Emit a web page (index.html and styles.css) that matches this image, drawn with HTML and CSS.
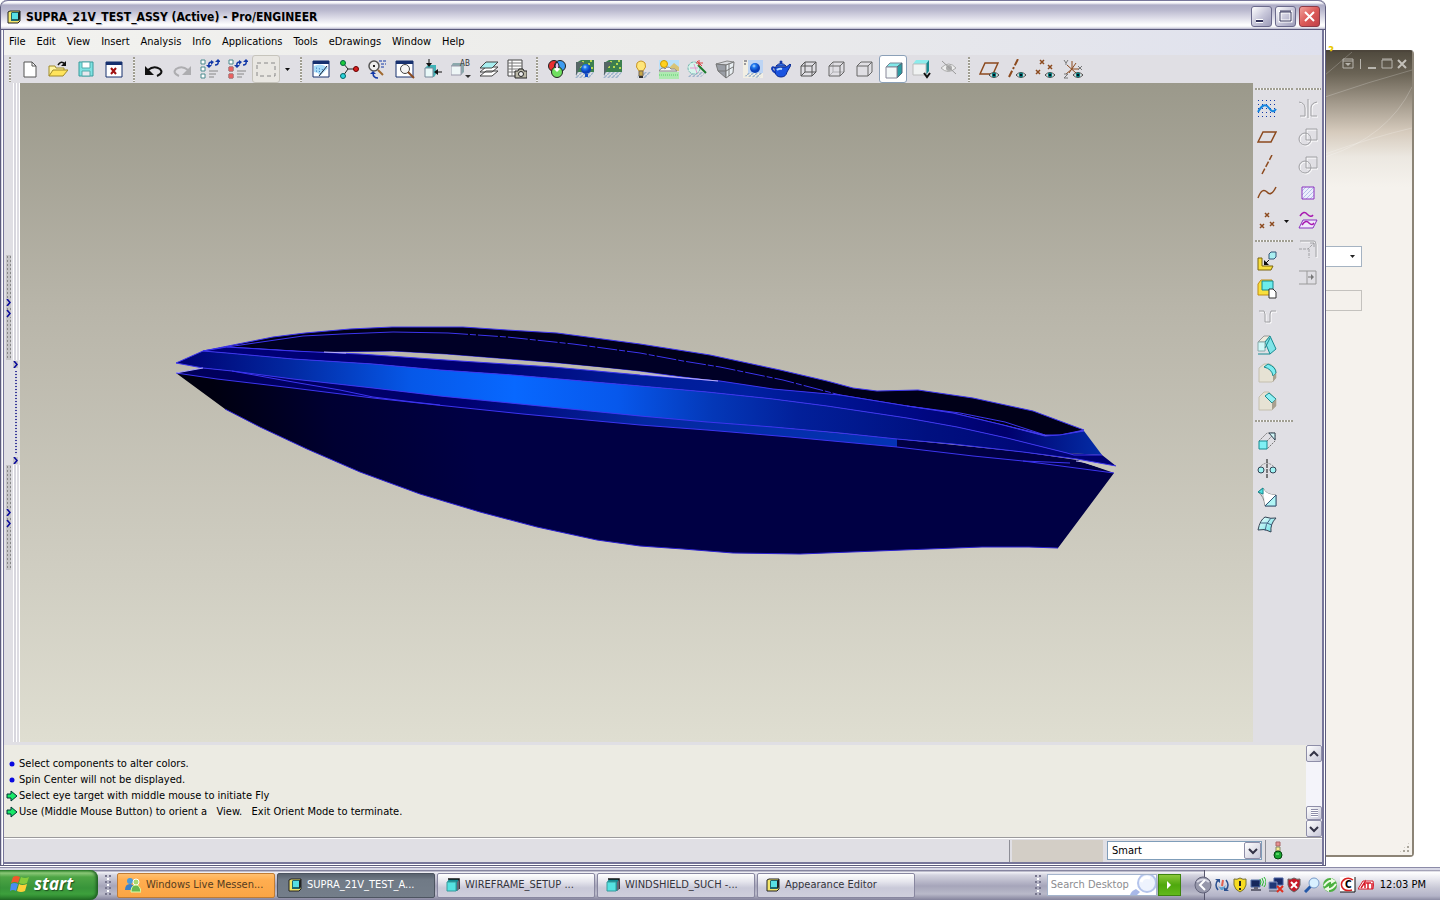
FILE: index.html
```html
<!DOCTYPE html>
<html lang="en">
<head>
    <meta charset="UTF-8">
    <meta name="viewport" content="width=device-width, initial-scale=1.0">
    <title>SUPRA_21V_TEST_ASSY (Active) - Pro/ENGINEER</title>
    <link rel="stylesheet" href="styles.css">
</head>
<body>

<!-- Shared icon parts -->
<svg class="defs" width="0" height="0" aria-hidden="true">
    <defs>
        <pattern id="hatch" width="4" height="4" patternUnits="userSpaceOnUse"><path d="M0 4L4 0" stroke="#9db4cc" stroke-width="1.5"/></pattern>
        <pattern id="dots" width="4" height="4" patternUnits="userSpaceOnUse"><path d="M1 1h1v1h-1z" fill="#1238a8"/></pattern>
        <linearGradient id="cyan" x2="1" y2="1"><stop offset="0" stop-color="#f4ffff"/><stop offset="1" stop-color="#5cdfe4"/></linearGradient>
        <radialGradient id="ball" cx=".4" cy=".3"><stop offset="0" stop-color="#bfe0ff"/><stop offset=".4" stop-color="#1f7bf0"/><stop offset="1" stop-color="#0a3fb8"/></radialGradient>
        <symbol id="part" viewBox="0 0 14 14"><path d="M1 4l2-3h10v10l-2 2H1z" fill="#138d94"/><path d="M1 4h9v9H1z" fill="#55e2e2" stroke="#3a9a9c"/><path d="M2 1h11v10" fill="none" stroke="#111" stroke-width="1.500"/><path d="M11 4l2-2v9l-2 2z" fill="#667"/></symbol>
        <symbol id="assy" viewBox="0 0 14 14"><path d="M1 2l2-1h10v10l-2 2H1z" fill="#f3e66b" stroke="#222"/><path d="M5 2h8v7l-2 2H4V3z" fill="#20666c"/><path d="M5 3h6v6H5z" fill="#58dfe4"/><path d="M11 3l2-2v8l-2 2z" fill="#222"/></symbol>
        <symbol id="eye" viewBox="0 0 10 6"><path d="M0 3Q5-2 10 3Q5 8 0 3z" fill="#fff" stroke="#444"/><circle cx="5" cy="3" r="2.4" fill="#087c7c"/><path d="M4 2h2v2H4z" fill="#012"/></symbol>
        <symbol id="tree" viewBox="0 0 20 20"><path d="M1 1h4v4H1zM1 8h4v4H1zM1 15h4v4H1z" fill="#fff" stroke="#4b8a8e"/><path d="M9 7q-1-4 3-4M18 2q1 4-3 4" fill="none" stroke="#1238a8" stroke-width="1.500"/><path d="M6 6h6L9 9zM15 3h6l-3-3zM11 1l3 2-3 3z" fill="#1238a8"/><path d="M9 12h9M9 15h7M9 18h5" stroke="#888"/></symbol>
        <symbol id="shapes" viewBox="0 0 20 20"><g fill="none" stroke="#fff"><path d="M9 3h11v11H9z"/><circle cx="8" cy="13" r="6"/></g><g fill="none" stroke="#a0a0a4"><path d="M8 2h11v11H8z"/><circle cx="7" cy="12" r="6"/></g></symbol>
        <symbol id="scene" viewBox="0 0 20 20"><path d="M1 4l5-3h13v12H1z" fill="#3c7f4f"/><path d="M2 4h2M7 3h2M13 5h2M10 8h2M16 9h2M5 8h2M15 2h2" stroke="#b8d850" stroke-width="2"/><path d="M1 13h18l-4 6H0z" fill="url(#hatch)"/><path d="M1 3v14l3-7 5-7z" fill="#566"/></symbol>
        <symbol id="chev" viewBox="0 0 5 7"><path d="M1 0l3 3.5L1 7" fill="none" stroke="#0a0a9c" stroke-width="1.6"/></symbol>
    </defs>
</svg>

<main class="desktop">

    <section class="back-window" aria-label="Background window">
        <span class="back-mark" aria-hidden="true">?</span>
        <div class="back-inner">
            <svg class="swoosh" viewBox="0 0 90 160" preserveAspectRatio="none" aria-hidden="true"><path d="M0 23L28 0M0 45Q45 30 90 18M0 105Q65 85 90 35M0 102Q50 85 90 76" fill="none" stroke="#fff" stroke-opacity=".22"/></svg>
            <div class="back-controls">
                <button aria-label="Roll up"><svg width="12" height="12" viewBox="0 0 12 12"><path d="M1 1h10v9H1zM1 3h10" fill="none" stroke="#b8b5ae"/><path d="M3 5h6L6 8z" fill="#b8b5ae"/></svg></button>
                <span class="back-sep"></span>
                <button aria-label="Minimize back"><svg width="10" height="12" viewBox="0 0 10 12"><path d="M1 9h8v2H1z" fill="#b8b5ae"/></svg></button>
                <button aria-label="Maximize back"><svg width="12" height="12" viewBox="0 0 12 12"><path d="M1 2h10v8H1zM1 1h10" fill="none" stroke="#b8b5ae"/></svg></button>
                <button aria-label="Close back"><svg width="10" height="12" viewBox="0 0 10 12"><path d="M1 2l8 8M9 2l-8 8" stroke="#c4c1ba" stroke-width="2"/></svg></button>
            </div>
            <div class="back-form">
                <select class="back-select" aria-label="Choice"><option></option></select>
                <input class="back-input" type="text" aria-label="Value" disabled>
            </div>
            <span class="back-grip" aria-hidden="true"></span>
        </div>
    </section>

    <section class="window">
        <header class="titlebar">
            <svg width="14" height="14"><use href="#assy"/></svg>
            <h1>SUPRA_21V_TEST_ASSY (Active) - Pro/ENGINEER</h1>
            <button class="win-btn" aria-label="Minimize"><svg width="19" height="19"><path d="M4 14h7" stroke="#fff" stroke-width="4"/><path d="M4 14h7" stroke="#33335a" stroke-width="2"/></svg></button>
            <button class="win-btn" aria-label="Maximize"><svg width="19" height="19"><path d="M4 5h11v9H4z" fill="none" stroke="#fff" stroke-width="3"/><path d="M4 5h11v9H4zM4 4h11" fill="none" stroke="#33335a"/></svg></button>
            <button class="win-btn close" aria-label="Close"><svg width="19" height="19"><path d="M5 5l9 9M14 5l-9 9" stroke="#fff" stroke-width="2"/></svg></button>
        </header>

        <nav class="menubar">
            <button>File</button><button>Edit</button><button>View</button><button>Insert</button><button>Analysis</button><button>Info</button><button>Applications</button><button>Tools</button><button>eDrawings</button><button>Window</button><button>Help</button>
        </nav>

        <div class="toolbar">
            <span class="grip"></span>
            <button aria-label="New"><svg viewBox="0 0 20 20"><path d="M4 3h8l4 4v11H4z" fill="#fff" stroke="#555"/><path d="M12 3v4h4" fill="none" stroke="#555"/></svg></button>
            <button aria-label="Open"><svg viewBox="0 0 20 20"><path d="M1 17V7h6l1 2h8v3" fill="#fff4a0" stroke="#a08a2a"/><path d="M1 17l4-6h15l-5 6z" fill="#ffe45c" stroke="#a08a2a"/><path d="M10 6q3-5 7-1" fill="none" stroke="#111" stroke-width="1.5"/><path d="M18 2v5h-5z" fill="#111"/></svg></button>
            <button aria-label="Save"><svg viewBox="0 0 20 20"><path d="M3 3h14v14H3z" fill="#7fe3e3" stroke="#3a9a9c"/><path d="M6 3h8v6H6z" fill="#fff" stroke="#5aa"/><path d="M6 12h8v5H6z" fill="#e8e8ee" stroke="#5aa"/></svg></button>
            <button aria-label="Close window"><svg viewBox="0 0 20 20"><path d="M2 3h16v15H2z" fill="#fff" stroke="#16306e"/><path d="M2 3h16v3H2z" fill="#16306e"/><path d="M7 9l5 6m0-6l-5 6" stroke="#a01010" stroke-width="2"/></svg></button>
            <span class="grip"></span>
            <button aria-label="Undo"><svg viewBox="0 0 20 20"><path d="M4 11q6-5 12-1q4 4-3 7" fill="none" stroke="#111" stroke-width="2"/><path d="M1 7v9h9z" fill="#111"/></svg></button>
            <button aria-label="Redo"><svg viewBox="0 0 20 20"><path d="M16 11q-6-5-12-1q-4 4 3 7" fill="none" stroke="#adadb0" stroke-width="2"/><path d="M19 7v9h-9z" fill="#adadb0"/></svg></button>
            <button aria-label="Regenerate"><svg viewBox="0 0 20 20"><use href="#tree"/></svg></button>
            <button aria-label="Regenerate manager"><svg viewBox="0 0 20 20"><use href="#tree"/><path d="M1 8h4v4H1zM1 15h4v4H1z" fill="#f06060" stroke="#c66"/></svg></button>
            <button class="framed" aria-label="Select"><svg viewBox="0 0 20 20"><path d="M1 4h18v13H1z" fill="none" stroke="#888" stroke-dasharray="4 3"/></svg></button>
            <button class="drop" aria-label="Select options"><svg viewBox="0 0 5 3"><path d="M0 0h5L2.500 3z" fill="#111"/></svg></button>
            <span class="grip"></span>
            <button aria-label="Sketcher display"><svg viewBox="0 0 20 20"><path d="M2 2h16v16H2z" fill="#fff" stroke="#16306e"/><path d="M2 2h16v3H2z" fill="#16306e"/><path d="M3 7q6-3 11 0l3 2-8 8-2-3-4-1z" fill="#a8dcf8"/><path d="M5 9l8 2M5 12l6 1M9 15l3-3" stroke="#2870b8" stroke-dasharray="1 2"/><path d="M8 17l8-10" stroke="#223"/></svg></button>
            <button aria-label="Spin center"><svg viewBox="0 0 20 20"><path d="M4 4l5 6-5 7M9 10h8" fill="none" stroke="#222"/><circle cx="4" cy="4" r="2.500" fill="#1ecb3c" stroke="#064"/><circle cx="4" cy="17" r="2.500" fill="#2cd3dc" stroke="#066"/><circle cx="17" cy="10" r="2.500" fill="#d81e1e" stroke="#600"/></svg></button>
            <button aria-label="Orient mode"><svg viewBox="0 0 20 20"><circle cx="7" cy="7" r="5" fill="#eee" stroke="#555" stroke-width="1.500"/><path d="M6 6h2v2H6z" fill="#222"/><path d="M11 11l5 5" stroke="#a06a30" stroke-width="2"/><path d="M12 2h7M14 5h5M14 8h4" stroke="#1238a8" stroke-dasharray="3 1"/><path d="M11 19q-5 0-5-5" fill="none" stroke="#1238a8" stroke-width="1.500"/><path d="M3 15l3-3 3 3z" fill="#1238a8"/></svg></button>
            <button aria-label="Refit"><svg viewBox="0 0 20 20"><path d="M1 2h17v16H1z" fill="#fff" stroke="#16306e"/><path d="M1 2h17v3H1z" fill="#16306e"/><circle cx="10" cy="10" r="4.500" fill="#f4f4f4" stroke="#444"/><path d="M13 13l6 6" stroke="#8a4a20" stroke-width="2"/></svg></button>
            <button aria-label="Reorient"><svg viewBox="0 0 20 20"><path d="M2 9l3-3h8v9l-2 3H2z" fill="#40b4b8"/><path d="M2 9h8v9H2z" fill="#e8f8f8" stroke="#789"/><path d="M6 0v6M19 13h-6" stroke="#111"/><path d="M3 4h6L6 8zM15 10v6l-4-3z" fill="#111"/></svg></button>
            <button aria-label="Saved views"><svg viewBox="0 0 20 20"><path d="M0 7l2-3h11v9l-3 3H0z" fill="#8ba8ac"/><path d="M0 7h10v9H0z" fill="#eef6f6" stroke="#99a"/><text x="9" y="7" class="icon-text">AB</text><path d="M14 16h6l-3 3z" fill="#333"/></svg></button>
            <button aria-label="Layers"><svg viewBox="0 0 20 20"><path d="M1 17l6-5h12l-6 5zM1 13l6-5h12l-6 5z" fill="#fff" stroke="#444"/><path d="M1 9l6-6h12l-6 6z" fill="#a8eef0" stroke="#444"/></svg></button>
            <button aria-label="View manager"><svg viewBox="0 0 20 20"><path d="M1 1h14v16H1z" fill="#fff" stroke="#444"/><path d="M1 4h14M1 7h14M1 10h14M1 13h14M5 1v16" stroke="#777"/><path d="M8 12h3l1-2h4l1 2h3v7H8z" fill="#bbb9a8" stroke="#222"/><circle cx="14" cy="15" r="2.500" fill="#eee" stroke="#222"/></svg></button>
            <span class="grip"></span>
            <button aria-label="Color and appearance"><svg viewBox="0 0 20 20"><circle cx="7" cy="7" r="5.500" fill="#e83030" stroke="#222"/><circle cx="13" cy="7" r="5.500" fill="#3c9cf0" stroke="#222"/><circle cx="10" cy="13" r="5.500" fill="#70e060" stroke="#222"/><path d="M10 3q4 4 0 8q-4-4 0-8" fill="#e8c0f0" stroke="#222"/><path d="M7 10q3-3 6 0l-3 3z" fill="#fff"/></svg></button>
            <button aria-label="Scene with model"><svg viewBox="0 0 20 20"><use href="#scene"/><circle cx="11" cy="10" r="5" fill="url(#ball)"/><path d="M10 15h3v3h-3z" fill="#1450c8"/></svg></button>
            <button aria-label="Scene"><svg viewBox="0 0 20 20"><use href="#scene"/></svg></button>
            <button aria-label="Lights"><svg viewBox="0 0 20 20"><path d="M9 13h11l-5 6H6z" fill="url(#hatch)"/><path d="M8 12q-4-4-2-8q4-4 8 0q2 4-2 8z" fill="#ffe67a" stroke="#c8952a"/><path d="M8 12h4v5H8z" fill="#c8a848" stroke="#765"/><path d="M8 18h4" stroke="#333" stroke-width="2"/></svg></button>
            <button aria-label="Environment"><svg viewBox="0 0 20 20"><path d="M0 1h20v11H0z" fill="#b8e0fa"/><path d="M9 10l6-6 5 4v4H9z" fill="#d8c478"/><circle cx="5" cy="5" r="3.500" fill="#ffd21e" stroke="#c90"/><path d="M0 12q3-5 6-2 3-4 6 0 4-1 6 2z" fill="#f4f4f4" stroke="#888"/><path d="M0 13h20v7H0z" fill="#aeeab0"/><path d="M0 16h20" stroke="#5aca6a" stroke-dasharray="1 1"/></svg></button>
            <button aria-label="Effects"><svg viewBox="0 0 20 20"><path d="M5 13h14l-5 5H0z" fill="url(#hatch)"/><circle cx="7" cy="9" r="6" fill="#d8f4ec" stroke="#74b8b0" stroke-dasharray="3 1"/><path d="M3 9h8M7 5l3 9" stroke="#ea9ad0"/><path d="M11 6l8 8" stroke="#1a7a2a" stroke-width="2"/><path d="M12 1v6M9 4h7M10 2l5 5" stroke="#e04040"/></svg></button>
            <button aria-label="Perspective"><svg viewBox="0 0 20 20"><path d="M1 5l11-3 7 1-8 3z" fill="#d8dade" stroke="#888"/><path d="M1 5l10 1v13L3 12z" fill="#9a9ea6" stroke="#777"/><path d="M11 6l8-3-1 11-7 5z" fill="#e8eef2" stroke="#777"/><path d="M3 12h8l7-4M14 5v12" fill="none" stroke="#777"/></svg></button>
            <button aria-label="Room"><svg viewBox="0 0 20 20"><path d="M0 1h20v18H0z" fill="#f2efe4"/><path d="M5 1h15v13H5z" fill="#bcd4f4"/><path d="M0 17l5-3h15l-4 5z" fill="url(#hatch)"/><circle cx="12" cy="9" r="5" fill="url(#ball)"/><path d="M1 2h3M1 5h2" stroke="#445"/></svg></button>
            <button aria-label="Render"><svg viewBox="0 0 20 20"><path d="M4 9Q1 7 1 10q1 3 4 4" fill="none" stroke="#123cb8" stroke-width="2"/><path d="M4 8h11q2-1 4-3l1 1-4 7q-1 5-6 5-5 0-6-5z" fill="#1a54e0" stroke="#0a2a90"/><path d="M5 7q5-5 10 0z" fill="#3a7af4" stroke="#0a2a90"/><circle cx="10" cy="3" r="1.500" fill="#1238a8"/><path d="M6 11q2-2 5-1" stroke="#b8dcff" fill="none" stroke-width="2"/></svg></button>
            <button aria-label="Wireframe"><svg viewBox="0 0 20 20"><path d="M2 7h11v10H2zM6 3h11v10H6zM2 7l4-4M13 7l4-4M13 17l4-4M2 17l4-4" fill="none" stroke="#555"/></svg></button>
            <button aria-label="Hidden line"><svg viewBox="0 0 20 20"><path d="M6 3v10h11M2 17l4-4" fill="none" stroke="#b0b0b4"/><path d="M2 7h11v10H2zM2 7l4-4h11v10l-4 4M13 7l4-4" fill="none" stroke="#666"/></svg></button>
            <button aria-label="No hidden"><svg viewBox="0 0 20 20"><path d="M2 7h11v10H2zM2 7l4-4h11v10l-4 4M13 7l4-4" fill="none" stroke="#666"/></svg></button>
            <button class="pressed" aria-label="Shading" aria-pressed="true"><svg viewBox="0 0 20 20"><path d="M3 8l4-4h12l-5 4z" fill="#80e8e8" stroke="#789"/><path d="M14 8l5-4v10l-5 5z" fill="#2a9ca2" stroke="#567"/><path d="M3 8h11v11H3z" fill="#f4f8f8" stroke="#889"/></svg></button>
            <button aria-label="Enhanced realism"><svg viewBox="0 0 20 20"><path d="M2 5l3-4h13l-3 4z" fill="#8cecec"/><path d="M15 5l3-4v11l-3 4z" fill="#178a90"/><path d="M2 5h13v11H2z" fill="#f0f2f2" stroke="#bbb"/><path d="M13 14l3 4 3-4" fill="none" stroke="#111" stroke-width="2"/></svg></button>
            <button aria-label="Hide"><svg viewBox="0 0 20 20"><path d="M2 9q8-8 15 0q-8 7-15 0z" fill="#eee" stroke="#aaa"/><circle cx="10" cy="9" r="3" fill="#aaa"/><path d="M3 2l14 13" stroke="#999"/></svg></button>
            <span class="grip"></span>
            <button aria-label="Show planes"><svg viewBox="0 0 20 20"><path d="M1 15L6 4h13l-5 11z" fill="none" stroke="#8c4a1e" stroke-width="1.500"/><use href="#eye" x="10" y="13" width="10" height="6"/></svg></button>
            <button aria-label="Show axes"><svg viewBox="0 0 20 20"><path d="M2 18L11 0" stroke="#8c4a1e" stroke-width="2" stroke-dasharray="7 2 2 2"/><use href="#eye" x="9" y="13" width="10" height="6"/></svg></button>
            <button aria-label="Show points"><svg viewBox="0 0 20 20"><path d="M5 1l4 4m0-4L5 5M1 11l4 4m0-4l-4 4M13 6l4 4m0-4l-4 4" stroke="#8c4a1e" stroke-width="1.500"/><use href="#eye" x="10" y="13" width="10" height="6"/></svg></button>
            <button aria-label="Show coordinate systems"><svg viewBox="0 0 20 20"><path d="M9 10V2M9 10l-6 5M9 10h7M4 6l9 8M13 4l-7 10" stroke="#8c4a1e"/><path d="M1 1l2 3 2-3M3 4v2M15 7l4 4m0-4l-4 4M1 15h4l-4 4h4" fill="none" stroke="#777"/><use href="#eye" x="10" y="13" width="10" height="6"/></svg></button>
        </div>

        <div class="workspace">
            <div class="sashes" aria-hidden="true">
                <div class="sash-col">
                    <div class="sash"><svg width="5" height="7"><use href="#chev"/></svg><svg width="5" height="7"><use href="#chev"/></svg></div>
                    <div class="sash"><svg width="5" height="7"><use href="#chev"/></svg><svg width="5" height="7"><use href="#chev"/></svg></div>
                </div>
                <div class="sash-rail">
                    <div class="sash-mid"><svg width="5" height="7"><use href="#chev"/></svg><span></span><svg width="5" height="7"><use href="#chev"/></svg></div>
                </div>
            </div>

            <div class="viewport">
                <svg class="model" viewBox="20 83 1233 659" role="img" aria-label="Shaded boat hull">
                    <defs>
                        <linearGradient id="band" gradientUnits="userSpaceOnUse" x1="176" y1="0" x2="1116" y2="0">
                            <stop offset="0" stop-color="#000070"/><stop offset=".12" stop-color="#0228a0"/><stop offset=".25" stop-color="#0658e8"/><stop offset=".36" stop-color="#0868ff"/><stop offset=".47" stop-color="#0758ec"/><stop offset=".57" stop-color="#0438b8"/><stop offset=".66" stop-color="#02209a"/><stop offset=".8" stop-color="#001080"/><stop offset="1" stop-color="#000070"/>
                        </linearGradient>
                        <linearGradient id="deck" gradientUnits="userSpaceOnUse" x1="200" y1="0" x2="1116" y2="0">
                            <stop offset="0" stop-color="#000078"/><stop offset=".3" stop-color="#000070"/><stop offset=".47" stop-color="#001c98"/><stop offset=".6" stop-color="#0020a0"/><stop offset=".78" stop-color="#000884"/><stop offset=".88" stop-color="#00006c"/><stop offset="1" stop-color="#0434b0"/>
                        </linearGradient>
                        <linearGradient id="strip" gradientUnits="userSpaceOnUse" x1="176" y1="0" x2="898" y2="0">
                            <stop offset="0" stop-color="#000058"/><stop offset=".4" stop-color="#000070"/><stop offset=".65" stop-color="#0428a0"/><stop offset="1" stop-color="#0434b4"/>
                        </linearGradient>
                        <linearGradient id="hull" gradientUnits="userSpaceOnUse" x1="215" y1="400" x2="460" y2="360">
                            <stop offset="0" stop-color="#000010"/><stop offset=".45" stop-color="#000032"/><stop offset="1" stop-color="#000044"/>
                        </linearGradient>
                    </defs>
                    <!-- hull -->
                    <path d="M176 373L203 369L232 371L293 379L373 388L440 396L510 403L640 416L773 427L897 439L1023 452L1077 460L1114 473L1058 548L1029 547H982L903 550L800 554L733 553L683 549L640 546L597 540L537 527L480 512L420 494L360 472L307 449L260 427L225 409z" fill="url(#hull)"/>
                    <path d="M225 409L260 427L307 449L360 472L420 494L480 512L537 527L597 540L640 546L683 549L733 553L800 554L903 550L982 547H1029L1058 548" fill="none" stroke="#2a20d0"/>
                    <path d="M176 373L203 368L232 371L293 379L373 388L440 396L510 403L640 416L707 422L773 427L897 439V447L790 437L707 430L640 425L523 414L437 405L373 398L293 388L217 379z" fill="url(#strip)"/>
                    <!-- coaming and open cockpit -->
                    <path d="M203 351L243 343L273 337L305 333L350 329L392 327H463L507 330L557 333L640 344L710 355L780 370L827 381L853 388L877 391L918 390L973 398L1033 411L1084 430L1060 435L1045 435L1003 425L953 413L907 406L840 395L773 389L720 381L683 377L640 371L603 367L560 363L510 359L447 354L393 351L313 352L227 347z" fill="#000018" stroke="#3c34f0"/>
                    <path d="M303 337L342 334L393 333L448 334L507 338L573 345L640 354L683 362L720 368L783 381L840 395L773 389L720 381L640 371L560 363L447 354L393 351L313 352L250 346z" fill="#000026"/>
                    <!-- deck edge and topside band -->
                    <path d="M203 351L227 347L293 351L360 354L460 361L553 367L640 375L720 381L773 389L840 395L907 406L953 413L1003 425L1045 436L1060 435L1084 431L1102 455L1067 453L1007 438L957 427L907 418L827 406L773 399L707 392L640 386L513 375L440 370L373 364L293 359L227 353z" fill="url(#deck)"/>
                    <path d="M176 363L203 351L227 353L293 359L373 364L440 370L513 375L640 386L707 392L773 399L827 406L907 418L957 427L1007 438L1067 453L1102 455L1116 466L1077 459L1023 452L953 444L897 439L840 433L773 427L707 422L640 416L510 403L440 396L373 388L293 379L232 371L203 368z" fill="url(#band)"/>
                    <!-- feature edges -->
                    <g class="edges">
                        <path d="M176 363L203 351L227 353L293 359L373 364L440 370L513 375L640 386L707 392L773 399L827 406L907 418L957 427L1007 438L1067 453L1074 455H1102"/>
                        <path d="M176 363L203 368L232 371L293 379L373 388L440 396L510 403L640 416L707 422L773 427L840 433L897 439L953 444L1023 452L1077 459L1116 466"/>
                        <path d="M203 351L227 347L293 351L360 354L460 361L553 367L640 375L720 381L773 389L840 395L907 406L953 413L1003 425L1045 436L1060 435L1084 431"/>
                        <path d="M176 373L217 379L293 388L373 398L437 405L523 414L640 425L707 430L790 437L897 447L973 456L1023 461L1114 473"/>
                        <path d="M232 371L293 382L340 390L373 397L413 402L440 405M227 347L303 336L342 334L393 332L448 333"/>
                        <path d="M448 333L507 337L573 344L640 353L683 361L720 367L783 380L840 395" stroke-dasharray="20 2 6 2"/>
                        <path d="M907 406L960 413L1005 422L1045 435M1023 461L1070 463"/>
                    </g>
                    <path d="M176 373L203 368" stroke="#aaa2ff"/>
                    <path d="M324 352L346 353M640 374L718 381M1076 461L1098 464" stroke="#b8b0f4"/>
                    <path d="M1078 461L1116 467L1114 472z" fill="#c8c7bd"/>
                </svg>
            </div>

            <div class="dock">
                <div class="dock-col">
                    <span class="hgrip"></span>
                    <button aria-label="Sketch"><svg viewBox="0 0 20 20"><path d="M1 1h19v19H1z" fill="url(#dots)"/><path d="M1 13q6-11 11-4q4 6 7 1" fill="none" stroke="#1486e0" stroke-width="2"/></svg></button>
                    <button aria-label="Plane"><svg viewBox="0 0 20 20"><path d="M1 15L6 5h13l-5 10z" fill="none" stroke="#8c4a1e" stroke-width="1.500"/></svg></button>
                    <button aria-label="Axis"><svg viewBox="0 0 20 20"><path d="M5 19L15 0" stroke="#8c4a1e" stroke-width="1.500" stroke-dasharray="6 2"/></svg></button>
                    <button aria-label="Curve"><svg viewBox="0 0 20 20"><path d="M1 15q4-11 9-6 4 5 9-5" fill="none" stroke="#8c4a1e" stroke-width="1.500"/></svg></button>
                    <div class="pair"><button aria-label="Points"><svg viewBox="0 0 20 20"><path d="M8 2l4 4m0-4L8 6M3 13l4 4m0-4l-4 4M13 11l4 4m0-4l-4 4" stroke="#8c4a1e" stroke-width="1.500"/></svg></button><button class="drop" aria-label="Point options"><svg viewBox="0 0 5 3"><path d="M0 0h5L2.500 3z" fill="#111"/></svg></button></div>
                    <span class="hgrip"></span>
                    <button aria-label="Assemble"><svg viewBox="0 0 20 20"><path d="M1 7h4v8h11l-2 4H1z" fill="#f8df3c" stroke="#7a6410"/><path d="M12 3l2-2h5v5l-2 2h-5z" fill="#a8eef0" stroke="#357"/><path d="M12 9l-4 4" stroke="#111"/><path d="M7 9v5h5z" fill="#111"/></svg></button>
                    <button aria-label="Create"><svg viewBox="0 0 20 20"><path d="M1 5l3-4h11v12l-3 3H1z" fill="#f8df3c" stroke="#c08a10"/><path d="M5 2h11v9H5z" fill="#6cecec" stroke="#178a90"/><path d="M12 10h4l3 3v6h-7z" fill="#fff" stroke="#333"/></svg></button>
                    <button aria-label="Hole"><svg viewBox="0 0 20 20"><path d="M2 4h5l1 3v8h5V7l1-3h5" transform="translate(1 1)" fill="none" stroke="#fff"/><path d="M2 4h5l1 3v8h5V7l1-3h5" fill="none" stroke="#a0a0a4"/></svg></button>
                    <button aria-label="Rib"><svg viewBox="0 0 20 20"><path d="M1 7l6-6h6L8 7z" fill="#eeeadc" stroke="#999"/><path d="M8 7l5-6 6 13-6 5z" fill="#80e4e8" stroke="#178a90"/><path d="M1 7h7v9H1z" fill="#d0f8f8" stroke="#8aa"/><path d="M8 13l5-10M1 19h12" stroke="#178a90"/></svg></button>
                    <button aria-label="Round"><svg viewBox="0 0 20 20"><path d="M2 5l5-4h6q6 3 6 9v5l-4 4H2z" fill="#e6e2d4" stroke="#c4bfae"/><path d="M7 4l4-3q8 3 8 9l-3 3q-1-7-9-9z" fill="#7cecf0" stroke="#178a90"/><path d="M16 13l3-3v5l-3 4z" fill="#a8a090"/></svg></button>
                    <button aria-label="Chamfer"><svg viewBox="0 0 20 20"><path d="M2 6l5-5h5l7 7v7l-4 4H2z" fill="#e6e2d4" stroke="#c4bfae"/><path d="M8 5l4-3 7 6-4 4z" fill="#90f0f4" stroke="#178a90"/><path d="M15 12l4-4v7l-4 4z" fill="#a8a090"/></svg></button>
                    <span class="hgrip"></span>
                    <button aria-label="Extrude"><svg viewBox="0 0 20 20"><path d="M2 10l8-8h8v8l-8 8M10 10l8-8" fill="none" stroke="#777" stroke-dasharray="2 1"/><path d="M12 2h6v7z" fill="#d0f6f6" stroke="#345"/><path d="M2 10h8v8H2z" fill="#80f0f4" stroke="#178a90"/></svg></button>
                    <button aria-label="Revolve"><svg viewBox="0 0 20 20"><path d="M2 9q8-10 17 1" fill="none" stroke="#888" stroke-dasharray="2 1"/><circle cx="4" cy="11" r="3" fill="#a0f4f4" stroke="#345"/><circle cx="16" cy="11" r="3" fill="#a0f4f4" stroke="#345"/><path d="M10 0v20" stroke="#111" stroke-dasharray="4 1"/></svg></button>
                    <button aria-label="Sweep blend"><svg viewBox="0 0 20 20"><path d="M1 5l5-4q3 7 13 7v11H8Q7 9 1 5z" fill="#d4d8da" stroke="#888"/><path d="M6 1q3 7 13 7L8 18z" fill="#fff"/><path d="M1 5l5-4v6z" fill="#50e0e0" stroke="#178a90"/><path d="M8 19L19 8v11z" fill="#b0f4f4" stroke="#357"/></svg></button>
                    <button aria-label="Boundary blend"><svg viewBox="0 0 20 20"><path d="M1 15Q3 5 8 2q6 2 11 1q-6 6-5 14-6-4-13-2z" fill="url(#cyan)" stroke="#345"/><path d="M4 8q6-1 11 2M8 16q0-7 6-13" fill="none" stroke="#468"/></svg></button>
                </div>
                <div class="dock-col narrow">
                    <span class="hgrip"></span>
                    <button aria-label="Mirror"><svg viewBox="0 0 20 20"><path d="M1 3q6 1 6 6v8H2M19 3q-6 1-6 6v8h6M10 0v19" transform="translate(1 1)" fill="none" stroke="#fff"/><path d="M1 3q6 1 6 6v8H2M19 3q-6 1-6 6v8h6M10 0v19" fill="none" stroke="#a0a0a4"/></svg></button>
                    <button aria-label="Merge"><svg viewBox="0 0 20 20"><use href="#shapes"/></svg></button>
                    <button aria-label="Intersect"><svg viewBox="0 0 20 20"><use href="#shapes"/></svg></button>
                    <button aria-label="Fill"><svg viewBox="0 0 20 20"><path d="M4 4h12v12H4z" fill="#eceffc"/><path d="M4 8l4-4M4 12l8-8M4 16L16 4M8 16l8-8M12 16l4-4" stroke="#b4c0ea"/><path d="M4 4h12v12H4z" fill="none" stroke="#8a30c0"/></svg></button>
                    <button aria-label="Project"><svg viewBox="0 0 20 20"><path d="M2 5q4-6 7-2 4 4 6 1" fill="none" stroke="#a818b0" stroke-width="1.500"/><path d="M1 17l4-8h14l-4 8z" fill="#f0e8fa" stroke="#8a30c0"/><path d="M4 14q4-6 7-2 3 3 5 0" fill="none" stroke="#a818b0" stroke-width="1.500"/></svg></button>
                    <button aria-label="Extend"><svg viewBox="0 0 20 20"><path d="M3 3h14q2 0 2 3v13" fill="none" stroke="#fff"/><path d="M2 2h14q2 0 2 3v13" fill="none" stroke="#a0a0a4"/><path d="M1 10h9l6-6M11 10v9" fill="none" stroke="#a0a0a4" stroke-dasharray="3 1"/><path d="M12 4h4v4" fill="none" stroke="#a0a0a4"/></svg></button>
                    <button aria-label="Offset"><svg viewBox="0 0 20 20"><path d="M1 4h17v13H1M9 4v13" fill="none" stroke="#999"/><path d="M10 10h5" stroke="#777"/><path d="M13 7l3 3-3 3z" fill="#777"/></svg></button>
                </div>
            </div>
        </div>

        <div class="messages">
            <ul>
                <li><svg width="12" height="12"><circle cx="6" cy="6" r="2.500" fill="#0808e0"/></svg>Select components to alter colors.</li>
                <li><svg width="12" height="12"><circle cx="6" cy="6" r="2.500" fill="#0808e0"/></svg>Spin Center will not be displayed.</li>
                <li><svg width="12" height="12"><path d="M1 4h4V1l6 5-6 5V8H1z" fill="#18e868" stroke="#033"/></svg>Select eye target with middle mouse to initiate Fly</li>
                <li><svg width="12" height="12"><path d="M1 4h4V1l6 5-6 5V8H1z" fill="#18e868" stroke="#033"/></svg>Use (Middle Mouse Button) to orient a   View.   Exit Orient Mode to terminate.</li>
            </ul>
            <div class="scroll">
                <button aria-label="Scroll up"><svg width="10" height="8"><path d="M1 6l4-4 4 4" fill="none" stroke="#333346" stroke-width="2"/></svg></button>
                <span class="track"></span>
                <span class="thumb"></span>
                <button aria-label="Scroll down"><svg width="10" height="8"><path d="M1 2l4 4 4-4" fill="none" stroke="#333346" stroke-width="2"/></svg></button>
            </div>
        </div>

        <footer class="status">
            <span class="status-text"></span>
            <span class="status-box"></span>
            <div class="combo">
                <select aria-label="Selection filter"><option>Smart</option></select>
                <span class="combo-arrow" aria-hidden="true"><svg width="10" height="8"><path d="M1 2l4 4 4-4" fill="none" stroke="#333346" stroke-width="2"/></svg></span>
            </div>
            <span class="light"><svg width="12" height="20"><path d="M4 1h4v4H4z" fill="#e89090" stroke="#a66"/><path d="M4 6h4v4H4z" fill="#f8f090" stroke="#886"/><circle cx="6" cy="14" r="4" fill="#1aa832" stroke="#064010"/><path d="M4 13h3" stroke="#9f9"/></svg></span>
        </footer>
    </section>
</main>

<footer class="taskbar">
    <button class="start"><svg width="20" height="20" viewBox="0 0 20 20"><path d="M3 3q3-2 7 0L8 9Q5 7 1 9z" fill="#f0582a"/><path d="M11 3q4 2 8 0l-2 6q-4 2-8 0z" fill="#86cc3c"/><path d="M1 10q3-2 7 0l-2 7q-3-2-6 0z" fill="#4a8cf0"/><path d="M9 10q3 2 8 0l-2 7q-4 2-8 0z" fill="#fcd038"/></svg>start</button>
    <span class="task-grip"></span>
    <div class="tasks">
        <button class="task alert"><svg width="16" height="16" viewBox="0 0 16 16"><circle cx="5" cy="4" r="3" fill="#4c9ad8"/><path d="M0 13q0-6 5-6 4 0 5 6z" fill="#3a80c8"/><circle cx="11" cy="5" r="3" fill="#a8d870" stroke="#fff"/><path d="M6 15q0-7 5-7 4 0 5 7z" fill="#68b850" stroke="#dfa"/></svg>Windows Live Messen...</button>
        <button class="task current"><svg width="14" height="14"><use href="#assy"/></svg>SUPRA_21V_TEST_A...</button>
        <button class="task"><svg width="14" height="14"><use href="#part"/></svg>WIREFRAME_SETUP ...</button>
        <button class="task"><svg width="14" height="14"><use href="#part"/></svg>WINDSHIELD_SUCH -...</button>
        <button class="task"><svg width="14" height="14"><use href="#assy"/></svg>Appearance Editor</button>
    </div>
    <span class="task-grip"></span>
    <div class="search">
        <input type="text" placeholder="Search Desktop" aria-label="Search Desktop">
        <svg width="26" height="20" viewBox="0 0 26 20" aria-hidden="true"><path d="M0 20q1-4 6-6l4 3-3 3z" fill="#a8b8e8"/><circle cx="17" cy="8" r="9" fill="#eef3fe" stroke="#b4c4ec" stroke-width="2"/><path d="M11 7q2-6 9-4" fill="none" stroke="#fff" stroke-width="3"/></svg>
    </div>
    <button class="go" aria-label="Search"><svg width="6" height="8"><path d="M1 0l4 4-4 4z" fill="#fff"/></svg></button>
    <div class="tray">
        <button class="expand" aria-label="Show hidden icons"><svg width="18" height="18"><circle cx="9" cy="9" r="8" fill="#9697aa" stroke="#62637a"/><path d="M3 6q6-5 12 0" fill="none" stroke="#d8d8e4" stroke-width="2"/><path d="M11 4L6 9l5 5" fill="none" stroke="#fff" stroke-width="2"/></svg></button>
        <svg width="16" height="16"><path d="M4 3q-4 5 0 10M12 3q4 5 0 10" fill="none" stroke="#2a5090" stroke-width="1.500"/><path d="M1 2h5v4zM15 14h-5v-4z" fill="#2a5090"/><path d="M4 9q4 3 8-1l-3 5H7z" fill="#5fa0d0"/><path d="M8 9l1-6" stroke="#e06050" stroke-width="2"/></svg>
        <svg width="16" height="16"><path d="M8 1q3 2 6 1v6q-1 5-6 7-5-2-6-7V2q3 1 6-1z" fill="#f8dc20" stroke="#777034"/><path d="M8 4v5M8 11v2" stroke="#222" stroke-width="2"/></svg>
        <svg width="16" height="16"><path d="M1 3h9v7H1z" fill="#16285c" stroke="#5570a8"/><path d="M1 13h10M4 11h4" stroke="#667" stroke-width="2"/><path d="M10 2q2 3 0 6M12 1q3 4 0 8M14 0q4 5 0 10" fill="none" stroke="#28b830"/></svg>
        <svg width="16" height="16"><path d="M6 1h9v7H6z" fill="#182a68" stroke="#4860a0"/><path d="M1 5h8v7H1z" fill="#203878" stroke="#8090c0"/><path d="M1 14h9" stroke="#889" stroke-width="2"/><path d="M9 9l6 6M15 9l-6 6" stroke="#e03020" stroke-width="2"/></svg>
        <svg width="16" height="16"><path d="M8 1q3 2 6 1v6q-1 5-6 7-5-2-6-7V2q3 1 6-1z" fill="#c81828" stroke="#666"/><path d="M5 5l6 6M11 5l-6 6" stroke="#fff" stroke-width="2"/></svg>
        <svg width="16" height="16"><path d="M1 15l6-6" stroke="#2458a8" stroke-width="3"/><circle cx="10" cy="6" r="5" fill="#d8f0ff" stroke="#789ac8"/></svg>
        <svg width="16" height="16"><circle cx="8" cy="8" r="7" fill="#4cb040"/><path d="M2 9q4-6 9-5M14 7q-4 6-9 5" fill="none" stroke="#eefae4" stroke-width="2"/><path d="M9 1l5 3-5 3zM7 15l-5-3 5-3z" fill="#eefae4"/></svg>
        <svg width="16" height="16"><path d="M0 0h15v15H0z" fill="#fff"/><path d="M0 15h15V0" fill="none" stroke="#111"/><path d="M13 3q-4-3-8-1-5 3-3 8 3 5 10 3" fill="none" stroke="#d82020" stroke-width="1.500"/><text x="5" y="11" class="tray-c">C</text></svg>
        <svg width="16" height="16"><path d="M0 12L5 4h10q1 4 0 8z" fill="#fff" stroke="#d81828"/><path d="M3 11l4-6v6M8 6h5M10 6v6M14 6v6" fill="none" stroke="#d81828" stroke-width="1.500"/></svg>
        <time>12:03 PM</time>
    </div>
</footer>

</body>
</html>
```
FILE: styles.css
```css
* {
    box-sizing: border-box;
}
body {
    margin: 0;
    height: 100vh;
    display: flex;
    flex-direction: column;
    overflow: hidden;
    background: #fff;
    color: #000;
    font-family: "DejaVu Sans Condensed", "DejaVu Sans", sans-serif;
    font-stretch: condensed;
    font-size: 11px;
    line-height: 16px;
}
button, input, select {
    font: inherit;
    color: inherit;
    margin: 0;
    padding: 0;
    border: 0;
    border-radius: 0;
    background: none;
}
svg {
    display: block;
    flex: none;
}
.defs {
    position: absolute;
}
.desktop {
    position: relative;
    flex: 1;
    min-height: 0;
}

/* Windows on the desktop */
.window {
    position: absolute;
    inset: 0 114px 0 0;
    display: flex;
    flex-direction: column;
    border: 1px solid #5c5b7c;
    border-width: 0 1px 1px;
    border-radius: 7px 7px 0 0;
    background: #e0dfe4;
    box-shadow: inset 1px 0 #d4d4e2, inset 2px 0 #fff, inset 3px 0 #77769a, inset -1px 0 #fff, inset -3px 0 #77769a, inset 0 -1px #fff, inset 0 -3px #77769a;
    padding: 0 3px 3px;
}
.titlebar {
    height: 30px;
    margin: 0 -3px;
    padding: 3px 5px 0 6px;
    display: flex;
    align-items: center;
    gap: 3px;
    border-top: 1px solid #77769a;
    border-bottom: 1px solid #5c5b7c;
    border-radius: 7px 7px 0 0;
    background: linear-gradient(#fff 0, #f4f4f8 2px, #aeadc6 4px, #b9b8ce 9px, #dddce8 17px, #fff 24px, #f2f2f6 26px, #b4b3ca 28px);
}
.titlebar h1 {
    flex: 1;
    margin: 0;
    padding-left: 2px;
    font-size: 12px;
    line-height: 20px;
    font-weight: bold;
    text-shadow: 1px 1px #c8c8d6;
}
.win-btn {
    width: 21px;
    height: 21px;
    border: 1px solid #6b6a8c;
    border-radius: 3px;
    background: linear-gradient(135deg, #fff, #c8c7da 50%, #9c9bb8);
}
.win-btn.close {
    background: linear-gradient(135deg, #f0a09a, #dc5a58 50%, #c04048);
    border-color: #8c3b48;
}
.menubar {
    height: 25px;
    padding-bottom: 2px;
    display: flex;
    align-items: center;
    background: linear-gradient(90deg, #f2f2ef, #ececea 50%, #dfe1ee);
}
.menubar button {
    padding: 0 6px 0 5px;
}

/* Toolbars */
.toolbar {
    height: 28px;
    display: flex;
    align-items: center;
}
.toolbar button, .dock button {
    width: 28px;
    height: 28px;
    display: flex;
    align-items: center;
    justify-content: center;
    flex: none;
}
.toolbar button svg, .dock button svg {
    width: 20px;
    height: 20px;
}
.toolbar .drop, .dock .drop {
    width: 15px;
}
.toolbar .drop svg, .dock .drop svg {
    width: 5px;
    height: 3px;
}
.toolbar .framed {
    border: 1px solid #c6c4bc;
    border-radius: 3px;
    background: #e9e7e2;
}
.toolbar .pressed {
    border: 1px solid #8ba0b8;
    border-radius: 3px;
    background: #fff;
}
.grip {
    width: 12px;
    height: 25px;
    flex: none;
    background: repeating-linear-gradient(#a09e92 0 2px, #f4f4f4 2px 3px) center / 2px 100% no-repeat;
}
.icon-text {
    font-size: 8px;
    fill: #333;
}

/* Model area */
.workspace {
    flex: 1;
    min-height: 0;
    display: flex;
}
.sashes {
    width: 16px;
    display: flex;
}
.sash-col {
    width: 9px;
    display: flex;
    flex-direction: column;
    align-items: center;
    justify-content: center;
    gap: 105px;
}
.sash {
    width: 5px;
    height: 105px;
    display: flex;
    flex-direction: column;
    justify-content: center;
    gap: 4px;
    background: radial-gradient(circle, #888 1px, transparent 1px) 0 0 / 3px 4px, #c6c5c8;
}
.sash svg {
    background: #c6c5c8;
}
.sash-rail {
    flex: 1;
    display: flex;
    flex-direction: column;
    justify-content: center;
    background: linear-gradient(90deg, #fff 1px, #d8d7de 1px 3px, #fff 3px 4px, #dddce2 4px 6px, #fff 6px);
}
.sash-mid {
    height: 105px;
    padding: 1px 1px 1px 0;
    display: flex;
    flex-direction: column;
    align-items: flex-start;
    justify-content: space-between;
    background: #e2e1e6;
}
.sash-mid svg {
    background: #c6c5c8;
}
.sash-mid span {
    width: 2px;
    height: 84px;
    margin-left: 2px;
    background: repeating-linear-gradient(#3b3a9c 0 1px, #d4d4dc 1px 3px);
}
.viewport {
    flex: 1;
    min-width: 0;
    background: linear-gradient(#9b998b, #b8b5a9 34%, #cfcdc1 73%, #dfded1);
}
.model {
    width: 100%;
    height: 100%;
}
.edges {
    fill: none;
    stroke: #3c34f0;
}
.dock {
    display: flex;
    gap: 3px;
    padding: 0 1px 0 2px;
}
.dock-col {
    width: 38px;
}
.dock-col button {
    width: 24px;
}
.dock-col.narrow {
    width: 25px;
}
.hgrip {
    display: block;
    height: 12px;
    background: repeating-linear-gradient(90deg, #a09e92 0 2px, #f4f4f4 2px 3px) center / 100% 2px no-repeat;
}
.dock .pair {
    display: flex;
}
.dock .pair .drop {
    width: 14px;
}

/* Message log */
.messages {
    height: 93px;
    margin-top: 3px;
    display: flex;
    background: #ecebe3;
    border-bottom: 1px solid #9b9a9c;
}
.messages ul {
    flex: 1;
    margin: 0;
    padding: 11px 2px 0;
    list-style: none;
}
.messages li {
    display: flex;
    align-items: center;
    gap: 1px;
    white-space: pre;
}
.scroll {
    width: 16px;
    display: flex;
    flex-direction: column;
    background: #f4f4fa;
}
.scroll button, .thumb, .combo-arrow {
    display: flex;
    align-items: center;
    justify-content: center;
    height: 17px;
    border: 1px solid #8e8ea8;
    border-radius: 2px;
    background: linear-gradient(135deg, #fff, #c8c8d8);
}
.track {
    flex: 1;
}
.thumb {
    height: 14px;
}
.thumb::after {
    content: "";
    width: 7px;
    height: 8px;
    background: repeating-linear-gradient(#8e8ea8 0 1px, #fff 1px 2px);
}
.status {
    height: 24px;
    display: flex;
    align-items: center;
    border-top: 1px solid #fff;
}
.status-text {
    flex: 1;
    height: 22px;
    border-right: 1px solid #8e8e96;
}
.status-box {
    width: 91px;
    height: 22px;
    margin: 0 4px 0 2px;
    background: #d3cec6;
}
.combo {
    width: 155px;
    height: 19px;
    display: flex;
    border: 1px solid #7f9db9;
    background: #fff;
}
.combo select {
    flex: 1;
    padding-left: 4px;
    appearance: none;
}
.combo-arrow {
    width: 17px;
}
.light {
    height: 22px;
    width: 57px;
    margin-left: 3px;
    padding: 1px 6px;
    border-left: 1px solid #8e8e96;
}

/* Window behind */
.back-window {
    position: absolute;
    top: 50px;
    right: 26px;
    bottom: 9px;
    width: 50%;
    border: 2px solid #8c8476;
    border-top-color: #4c453b;
    border-radius: 4px;
}
.back-mark {
    position: absolute;
    top: -9px;
    right: 78px;
    color: #e8c800;
    font-weight: bold;
}
.back-inner {
    position: relative;
    height: 100%;
    background: linear-gradient(#504a3e, #6b6456 22px, #a1988a 50px, #d6cbbd 80px, #ece8e1 105px, #f5f2ed 135px);
}
.swoosh {
    position: absolute;
    top: 0;
    right: 0;
    width: 87px;
    height: 160px;
}
.back-controls {
    position: relative;
    display: flex;
    justify-content: flex-end;
    align-items: center;
    gap: 4px;
    padding: 6px 5px 0;
}
.back-controls button {
    display: flex;
}
.back-sep {
    width: 1px;
    height: 10px;
    margin: 0 2px;
    background: #b8b5ae;
}
.back-form {
    display: flex;
    flex-direction: column;
    align-items: flex-end;
    gap: 23px;
    padding: 176px 50px 0 0;
}
.back-select, .back-input {
    width: 160px;
    height: 21px;
    border: 1px solid #a5b3c2;
}
.back-select {
    appearance: none;
    background: url("data:image/svg+xml,%3Csvg xmlns='http://www.w3.org/2000/svg' width='5' height='3'%3E%3Cpath d='M0 0h5L2.500 3z' fill='%23222'/%3E%3C/svg%3E") right 6px center no-repeat #fff;
}
.back-input {
    border-color: #c4c2be;
    background: #f4f1ec;
}
.back-grip {
    position: absolute;
    right: 2px;
    bottom: 2px;
    width: 11px;
    height: 11px;
    background: repeating-linear-gradient(90deg, #aaa69c 0 2px, transparent 2px 4px);
    clip-path: polygon(100% 0, 100% 100%, 0 100%);
    mask: repeating-linear-gradient(#000 0 2px, transparent 2px 4px);
}

/* Taskbar */
.taskbar {
    height: 34px;
    padding-top: 4px;
    display: flex;
    align-items: center;
    background: linear-gradient(#fff 0 1px, #8c8ba8 1px 2px, #d8d8e6 2px 4px, #85849f 4px 5px, #f4f4f8 6px, #d4d4e0 9px, #a6a5ba 20px, #b9b9c9 28px, #84839c 34px);
}
.start {
    width: 98px;
    height: 30px;
    padding: 0 0 2px 10px;
    display: flex;
    align-items: center;
    gap: 4px;
    border-radius: 0 8px 8px 0;
    background: linear-gradient(#2e8a2a, #8cc878 3px, #4ea545 7px, #38943a 18px, #3da03c 24px, #226f26);
    box-shadow: inset -2px 0 3px #1f5f22;
    color: #fff;
    font-family: "Open Sans", sans-serif;
    font-stretch: normal;
    font-size: 17px;
    font-weight: bold;
    font-style: italic;
    text-shadow: 1px 1px 1px #1d4f1f;
}
.task-grip {
    width: 6px;
    height: 20px;
    flex: none;
    margin: 0 6px 0 7px;
    background: radial-gradient(circle at 1px 1px, #77768e 1px, transparent 1px) 0 0 / 4px 6px, radial-gradient(circle at 3px 4px, #fff 1px, transparent 1px) 0 0 / 4px 6px;
}
.tasks {
    flex: 1;
    min-width: 0;
    display: flex;
    gap: 2px;
}
.task {
    width: 158px;
    height: 25px;
    padding: 0 8px;
    display: flex;
    align-items: center;
    gap: 4px;
    border: 1px solid #8887a0;
    border-radius: 2px;
    background: linear-gradient(#fff, #e4e4ec 8px, #c9c9d8 14px, #cfcfdc);
    color: #34343c;
    white-space: nowrap;
}
.task svg {
    margin-right: 1px;
}
.task.alert {
    padding-left: 7px;
    background: linear-gradient(#ffc070, #ffae50 6px, #fba545);
    border-color: #c07c34;
    color: #553c20;
}
.task.current {
    padding-left: 10px;
    background: linear-gradient(#59626e, #707a86 6px, #747e8a);
    border-color: #4c5460;
    color: #fff;
}
.search {
    width: 110px;
    height: 22px;
    display: flex;
    align-items: stretch;
    overflow: hidden;
    border: 1px solid #a4b4cc;
    background: #fff;
}
.search input {
    flex: 1;
    min-width: 0;
    padding-left: 3px;
    outline: 0;
}
.search input::placeholder {
    color: #8c8c90;
    opacity: 1;
}
.search svg {
    margin-left: -4px;
}
.go {
    width: 23px;
    height: 22px;
    margin-left: 1px;
    display: flex;
    align-items: center;
    justify-content: center;
    border: 1px solid #3e8410;
    background: linear-gradient(#8cc83c, #4ea80c 50%, #62b81c);
}
.tray {
    height: 30px;
    margin-left: 23px;
    padding-right: 14px;
    display: flex;
    align-items: center;
    gap: 2px;
    border-left: 1px solid #56556c;
    background: linear-gradient(#85849f, #fff 2px, #ececf2 8px, #c8c8d6 18px, #b4b4c8 26px, #8c8ca4);
}
.expand {
    margin-left: -11px;
}
.tray time {
    padding-left: 4px;
    white-space: nowrap;
}
.tray-c {
    font-size: 10px;
    font-weight: bold;
}
```
